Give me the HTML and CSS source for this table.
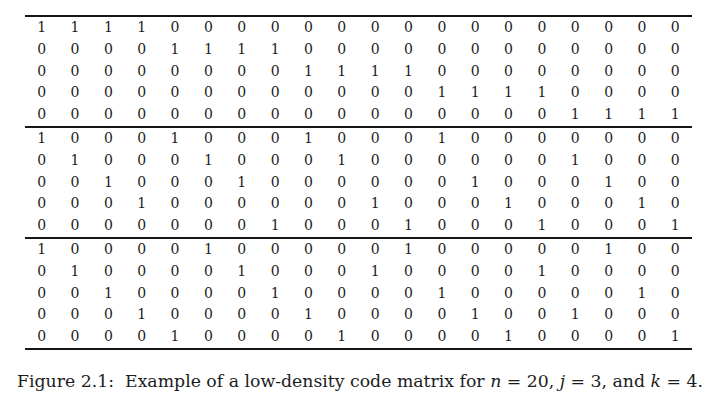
FILE: index.html
```html
<!DOCTYPE html>
<html>
<head>
<meta charset="utf-8">
<link rel="stylesheet" href="styles.css">
</head>
<body>
<figure class="figure">
  <div class="matrix">
    <div class="section">
      <span>1</span><span>1</span><span>1</span><span>1</span><span>0</span><span>0</span><span>0</span><span>0</span><span>0</span><span>0</span><span>0</span><span>0</span><span>0</span><span>0</span><span>0</span><span>0</span><span>0</span><span>0</span><span>0</span><span>0</span>
      <span>0</span><span>0</span><span>0</span><span>0</span><span>1</span><span>1</span><span>1</span><span>1</span><span>0</span><span>0</span><span>0</span><span>0</span><span>0</span><span>0</span><span>0</span><span>0</span><span>0</span><span>0</span><span>0</span><span>0</span>
      <span>0</span><span>0</span><span>0</span><span>0</span><span>0</span><span>0</span><span>0</span><span>0</span><span>1</span><span>1</span><span>1</span><span>1</span><span>0</span><span>0</span><span>0</span><span>0</span><span>0</span><span>0</span><span>0</span><span>0</span>
      <span>0</span><span>0</span><span>0</span><span>0</span><span>0</span><span>0</span><span>0</span><span>0</span><span>0</span><span>0</span><span>0</span><span>0</span><span>1</span><span>1</span><span>1</span><span>1</span><span>0</span><span>0</span><span>0</span><span>0</span>
      <span>0</span><span>0</span><span>0</span><span>0</span><span>0</span><span>0</span><span>0</span><span>0</span><span>0</span><span>0</span><span>0</span><span>0</span><span>0</span><span>0</span><span>0</span><span>0</span><span>1</span><span>1</span><span>1</span><span>1</span>
    </div>
    <div class="section">
      <span>1</span><span>0</span><span>0</span><span>0</span><span>1</span><span>0</span><span>0</span><span>0</span><span>1</span><span>0</span><span>0</span><span>0</span><span>1</span><span>0</span><span>0</span><span>0</span><span>0</span><span>0</span><span>0</span><span>0</span>
      <span>0</span><span>1</span><span>0</span><span>0</span><span>0</span><span>1</span><span>0</span><span>0</span><span>0</span><span>1</span><span>0</span><span>0</span><span>0</span><span>0</span><span>0</span><span>0</span><span>1</span><span>0</span><span>0</span><span>0</span>
      <span>0</span><span>0</span><span>1</span><span>0</span><span>0</span><span>0</span><span>1</span><span>0</span><span>0</span><span>0</span><span>0</span><span>0</span><span>0</span><span>1</span><span>0</span><span>0</span><span>0</span><span>1</span><span>0</span><span>0</span>
      <span>0</span><span>0</span><span>0</span><span>1</span><span>0</span><span>0</span><span>0</span><span>0</span><span>0</span><span>0</span><span>1</span><span>0</span><span>0</span><span>0</span><span>1</span><span>0</span><span>0</span><span>0</span><span>1</span><span>0</span>
      <span>0</span><span>0</span><span>0</span><span>0</span><span>0</span><span>0</span><span>0</span><span>1</span><span>0</span><span>0</span><span>0</span><span>1</span><span>0</span><span>0</span><span>0</span><span>1</span><span>0</span><span>0</span><span>0</span><span>1</span>
    </div>
    <div class="section">
      <span>1</span><span>0</span><span>0</span><span>0</span><span>0</span><span>1</span><span>0</span><span>0</span><span>0</span><span>0</span><span>0</span><span>1</span><span>0</span><span>0</span><span>0</span><span>0</span><span>0</span><span>1</span><span>0</span><span>0</span>
      <span>0</span><span>1</span><span>0</span><span>0</span><span>0</span><span>0</span><span>1</span><span>0</span><span>0</span><span>0</span><span>1</span><span>0</span><span>0</span><span>0</span><span>0</span><span>1</span><span>0</span><span>0</span><span>0</span><span>0</span>
      <span>0</span><span>0</span><span>1</span><span>0</span><span>0</span><span>0</span><span>0</span><span>1</span><span>0</span><span>0</span><span>0</span><span>0</span><span>1</span><span>0</span><span>0</span><span>0</span><span>0</span><span>0</span><span>1</span><span>0</span>
      <span>0</span><span>0</span><span>0</span><span>1</span><span>0</span><span>0</span><span>0</span><span>0</span><span>1</span><span>0</span><span>0</span><span>0</span><span>0</span><span>1</span><span>0</span><span>0</span><span>1</span><span>0</span><span>0</span><span>0</span>
      <span>0</span><span>0</span><span>0</span><span>0</span><span>1</span><span>0</span><span>0</span><span>0</span><span>0</span><span>1</span><span>0</span><span>0</span><span>0</span><span>0</span><span>1</span><span>0</span><span>0</span><span>0</span><span>0</span><span>1</span>
    </div>
  </div>
  <figcaption class="caption">Figure 2.1:&nbsp; Example of a low-density code matrix for <i>n</i> = 20, <i>j</i> = 3, and <i>k</i> = 4.</figcaption>
</figure>
</body>
</html>
```

FILE: styles.css
```css
html, body {
  margin: 0;
  padding: 0;
  background: #ffffff;
}

.figure {
  margin: 0;
  padding-top: 15px;
  color: #1c1c1c;
  font-family: "DejaVu Serif", "Liberation Serif", serif;
}

.matrix {
  width: 667px;
  margin-left: 25px;
  border-bottom: 2px solid #161616;
}

.section {
  display: grid;
  grid-template-columns: repeat(20, 1fr);
  grid-auto-rows: 21.8px;
  border-top: 2px solid #161616;
  font-size: 14px;
  line-height: 21.8px;
}

.section span {
  text-align: center;
}

.caption {
  margin: 21px 0 0 0;
  text-align: center;
  font-size: 17.3px;
  line-height: 20px;
  white-space: nowrap;
}

.caption i {
  font-style: italic;
}
```
